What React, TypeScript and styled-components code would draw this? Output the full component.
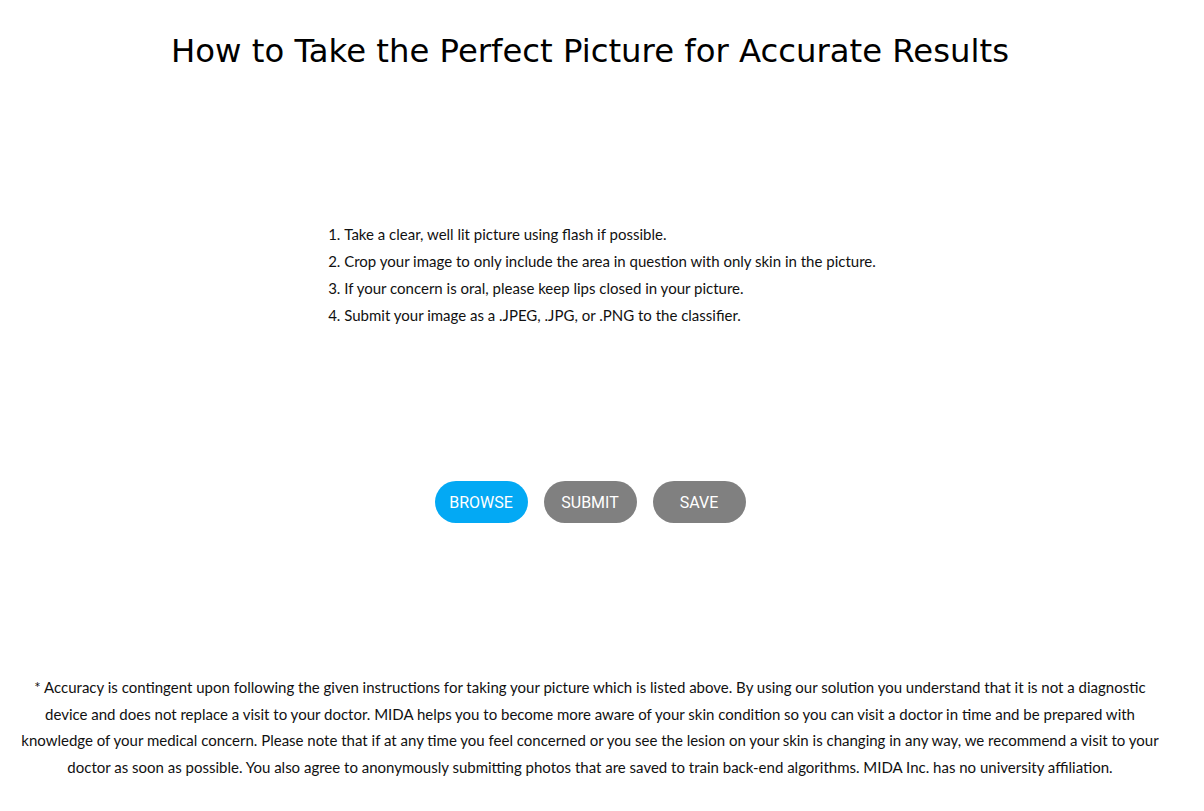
import React from "react";
import styled, { createGlobalStyle } from "styled-components";

const Global = createGlobalStyle`
  html, body { margin: 0; padding: 0; background: #fff; }
  body { font-family: Lato, "Open Sans", sans-serif; color: #111; }
`;

const Page = styled.div`
  width: 1180px;
  display: flex;
  flex-direction: column;
  align-items: center;
`;

const Title = styled.h1`
  margin: 29px 0 0;
  font-family: "DejaVu Sans", Verdana, sans-serif;
  font-weight: 400;
  font-size: 32.3px;
  line-height: 44px;
  color: #000;
  text-align: center;
`;

const ListWrap = styled.div`
  margin-top: 148px;
  text-align: center;
  width: 100%;
`;

const Steps = styled.ol`
  display: inline-block;
  text-align: left;
  margin: 0;
  padding-left: 40px;
  font-size: 15px;
  line-height: 27px;
  color: #111;
`;

const ButtonRow = styled.div`
  margin-top: 152px;
  display: flex;
  gap: 16px;
  justify-content: center;
`;

const Pill = styled.button<{ $primary?: boolean }>`
  width: 93px;
  height: 42px;
  border: none;
  border-radius: 21px;
  background: ${(p) => (p.$primary ? "#03a9f4" : "#808080")};
  color: #fff;
  font-family: Roboto, "Liberation Sans", sans-serif;
  font-size: 16px;
  cursor: pointer;
`;

const Disclaimer = styled.p`
  margin: 151px 0 0;
  padding: 0 18px;
  font-size: 15px;
  line-height: 26.7px;
  text-align: center;
  color: #111;
`;

export default function App() {
  return (
    <Page>
      <Global />
      <Title>How to Take the Perfect Picture for Accurate Results</Title>
      <ListWrap>
        <Steps>
          <li>Take a clear, well lit picture using flash if possible.</li>
          <li>Crop your image to only include the area in question with only skin in the picture.</li>
          <li>If your concern is oral, please keep lips closed in your picture.</li>
          <li>Submit your image as a .JPEG, .JPG, or .PNG to the classifier.</li>
        </Steps>
      </ListWrap>
      <ButtonRow>
        <Pill $primary>BROWSE</Pill>
        <Pill>SUBMIT</Pill>
        <Pill>SAVE</Pill>
      </ButtonRow>
      <Disclaimer>
        * Accuracy is contingent upon following the given instructions for taking your picture which is listed above. By using our solution you understand that it is not a diagnostic device and does not replace a visit to your doctor. MIDA helps you to become more aware of your skin condition so you can visit a doctor in time and be prepared with knowledge of your medical concern. Please note that if at any time you feel concerned or you see the lesion on your skin is changing in any way, we recommend a visit to your doctor as soon as possible. You also agree to anonymously submitting photos that are saved to train back-end algorithms. MIDA Inc. has no university affiliation.
      </Disclaimer>
    </Page>
  );
}
